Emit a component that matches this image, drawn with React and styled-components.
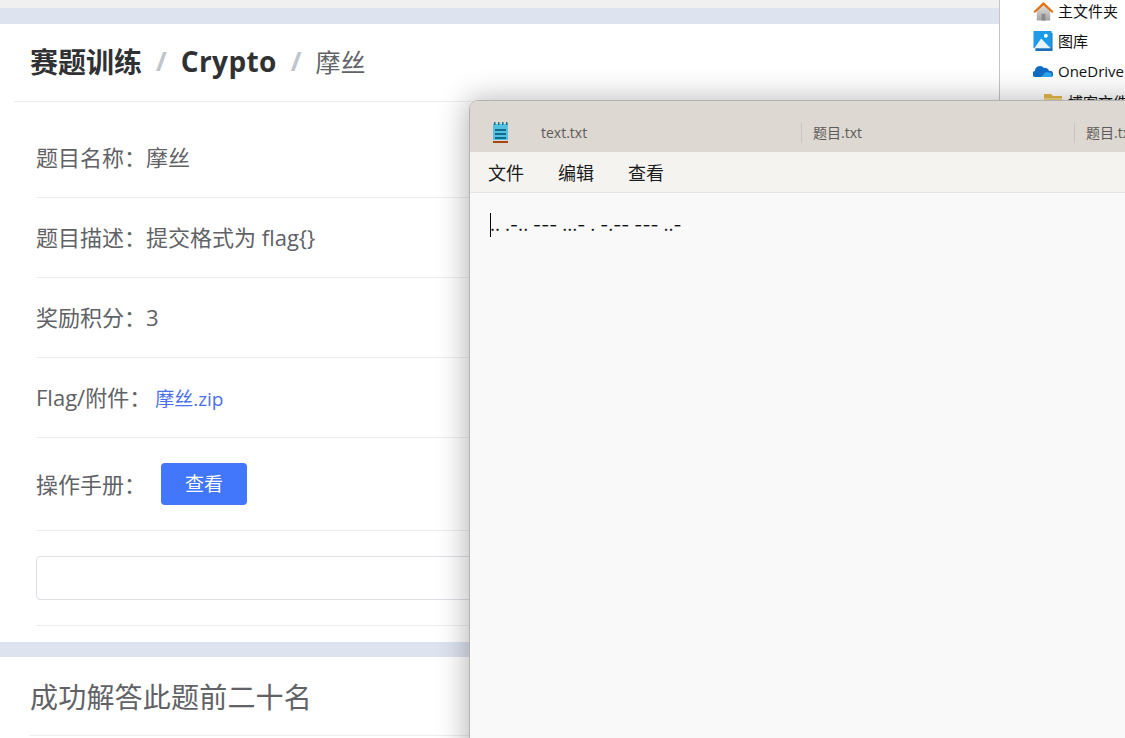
import styled, { createGlobalStyle } from 'styled-components';
import { useState } from 'react';

const GlobalStyle = createGlobalStyle`
  html, body {
    margin: 0;
    padding: 0;
    height: 738px;
    overflow: hidden;
    background: #fff;
    font-family: "Open Sans", "Noto Sans CJK SC", sans-serif;
  }
`;

const Screen = styled.div`
  position: relative;
  width: 1125px;
  height: 738px;
  overflow: hidden;
`;

const Page = styled.div`
  width: 1000px;
  height: 738px;
  border-right: 1px solid #c4c4c4;
  box-sizing: border-box;
  background: #fff;
`;

const TopStrip = styled.div`
  height: 8px;
  background: #f0f0f0;
`;

const Band = styled.div`
  height: ${p => p.$height}px;
  background: #dee3f0;
`;

const Header = styled.div`
  height: 78px;
  box-sizing: border-box;
  margin-left: 14px;
  padding: 0 0 4px 16px;
  display: flex;
  align-items: center;
  gap: 14px;
  border-bottom: 1px solid #eeeeee;
`;

const Crumb = styled.span`
  font-weight: ${p => (p.$current ? 400 : 700)};
  font-size: ${p => (p.$current ? 25 : 28)}px;
  color: ${p => (p.$current ? '#606266' : '#303133')};
  letter-spacing: ${p => (p.$latin ? 0.4 : 0)}px;
`;

const Slash = styled.span`
  color: #c0c4cc;
  font-weight: 700;
  font-size: 26px;
`;

const Body = styled.div`
  padding: 0 0 16px 36px;
`;

const Row = styled.div`
  height: ${p => p.$height}px;
  box-sizing: border-box;
  padding-top: ${p => p.$offset || 0}px;
  padding-bottom: ${p => (p.$control ? 0 : 4)}px;
  display: flex;
  align-items: center;
  border-bottom: 1px solid #eeeeee;
  font-size: 22px;
  color: #606266;
`;

const FileLink = styled.a`
  margin-left: 4px;
  padding-top: 4px;
  font-size: 19px;
  color: #4a6ff0;
`;

const ManualLabel = styled.span`
  margin-bottom: 2px;
`;

const ViewButton = styled.button`
  width: 86px;
  height: 42px;
  margin-left: 15px;
  padding: 0 0 3px;
  border: 0;
  border-radius: 4px;
  background: #4276fb;
  color: #fff;
  font: inherit;
  font-size: 19px;
`;

const FlagInput = styled.input`
  width: 100%;
  height: 44px;
  box-sizing: border-box;
  border: 1px solid #dcdfe6;
  border-radius: 4px;
  outline: none;
`;

const SectionTitle = styled.div`
  height: 79px;
  box-sizing: border-box;
  margin-left: 30px;
  display: flex;
  align-items: center;
  border-bottom: 1px solid #eeeeee;
  font-size: 28px;
  letter-spacing: 0.2px;
  color: #606266;
`;

const Explorer = styled.div`
  position: absolute;
  left: 1000px;
  top: 0;
  width: 125px;
  height: 738px;
  background: #fff;
  padding: 0 0 0 33px;
  box-sizing: border-box;
  overflow: hidden;
`;

const NavList = styled.div`
  margin-top: -4px;
`;

const NavItem = styled.div`
  height: 30px;
  display: flex;
  align-items: center;
  gap: 4px;
  margin-left: ${p => p.$indent || 0}px;
  font-size: 15px;
  color: #111;
  white-space: nowrap;
`;

const NavIcon = styled.span`
  flex: none;
  width: ${p => p.$width || 21}px;
  display: flex;
`;

const NavLabel = styled.span`
  position: relative;
  top: -1px;
`;

const Notepad = styled.div`
  position: absolute;
  left: 469px;
  top: 100px;
  width: 700px;
  height: 680px;
  box-sizing: border-box;
  border: 1px solid #b5b3b0;
  border-radius: 9px 0 0 0;
  background: #f9f9f9;
  box-shadow: -2px 0 30px rgba(0, 0, 0, 0.3);
  overflow: hidden;
`;

const TabBar = styled.div`
  height: 51px;
  box-sizing: border-box;
  padding: 12px 0 0 21px;
  display: flex;
  align-items: center;
  background: #ddd8d2;
`;

const AppIcon = styled.svg`
  flex: none;
  width: 18px;
  height: 22px;
  margin-right: 32px;
`;

const Tab = styled.div`
  width: ${p => (p.$first ? 260 : 273)}px;
  flex: none;
  box-sizing: border-box;
  padding-left: ${p => (p.$first ? 0 : 11)}px;
  height: 20px;
  line-height: 20px;
  font-size: 14px;
  color: #5d5b59;
  border-left: ${p => (p.$first ? 'none' : '1px solid #c9c5bf')};
`;

const MenuBar = styled.div`
  height: 41px;
  box-sizing: border-box;
  display: flex;
  align-items: center;
  gap: 34px;
  padding-left: 18px;
  background: #f4f3f0;
  border-bottom: 1px solid #e5e4e1;
  font-size: 18px;
  color: #1b1b1b;
`;

const Editor = styled.div`
  position: relative;
  padding: 19px 0 0 20px;
  font-family: Inter, sans-serif;
  font-size: 17.5px;
  line-height: 26px;
  color: #111;
`;

const Caret = styled.span`
  position: absolute;
  left: 20px;
  top: 20px;
  width: 1px;
  height: 24px;
  background: #000;
`;

const HomeIcon = () => (
  <svg width="21" height="20" viewBox="0 0 22 20">
    <defs>
      <linearGradient id="homeWall" x1="0" y1="0" x2="0" y2="1">
        <stop offset="0" stopColor="#e2e2e2" />
        <stop offset="1" stopColor="#a3a3a3" />
      </linearGradient>
    </defs>
    <path d="M4 9v11h14V9L11 3z" fill="url(#homeWall)" />
    <path d="M9 20v-7h4v7z" fill="#8a8a8a" />
    <path d="M0.5 10.5L11 0.5l10.5 10-1.5 1.5L11 4 2 12z" fill="#e2720f" />
  </svg>
);

const GalleryIcon = () => (
  <svg width="20" height="20" viewBox="0 0 20 21">
    <rect x="2" y="2" width="18" height="19" fill="#1f6fb8" />
    <rect x="0" y="0" width="19" height="18" fill="#1e9be8" />
    <circle cx="13" cy="5" r="2" fill="#fff" />
    <path d="M1 18l7-10 10 10z" fill="#e8f4fc" />
  </svg>
);

const CloudIcon = () => (
  <svg width="20" height="14" viewBox="0 0 20 14">
    <path d="M3 13a3 3 0 0 1-1-6 5 5 0 0 1 9-3 4 4 0 0 1 5 3 3 3 0 0 1 2 6z" fill="#0f6cc4" />
    <path d="M8 13l5-5 5 1a3 3 0 0 1 0 4z" fill="#29a8ea" />
  </svg>
);

const FolderIcon = () => (
  <svg width="18" height="14" viewBox="0 0 18 14">
    <path d="M0 0h7l2 2h9v12H0z" fill="#e9b949" />
    <rect y="4" width="18" height="10" fill="#f7d97e" />
  </svg>
);

const NotepadIcon = () => (
  <AppIcon viewBox="0 0 18 22">
    <rect x="2" y="2" width="15" height="16" fill="#56c0e0" />
    <rect x="4" y="7" width="11" height="2" fill="#0f6c8e" />
    <rect x="4" y="11" width="11" height="2" fill="#0f6c8e" />
    <rect x="4" y="15" width="11" height="2" fill="#0f6c8e" />
    <rect x="3" y="0" width="1.5" height="3" fill="#1a6f8c" />
    <rect x="7" y="0" width="1.5" height="3" fill="#1a6f8c" />
    <rect x="11" y="0" width="1.5" height="3" fill="#1a6f8c" />
    <rect x="15" y="0" width="1.5" height="3" fill="#1a6f8c" />
    <rect x="2" y="19" width="15" height="2" fill="#a3490f" />
  </AppIcon>
);

const COLON = '\uFF1A';
const infoRows = [`题目描述${COLON}提交格式为 flag{}`, `奖励积分${COLON}3`];

export default function App() {
  const [flag, setFlag] = useState('');

  return (
    <Screen>
      <GlobalStyle />
      <Page>
        <TopStrip />
        <Band $height={16} />
        <Header>
          <Crumb>赛题训练</Crumb>
          <Slash>/</Slash>
          <Crumb $latin>Crypto</Crumb>
          <Slash>/</Slash>
          <Crumb $current>摩丝</Crumb>
        </Header>
        <Body>
          <Row $height={96} $offset={16}>{`题目名称${COLON}摩丝`}</Row>
          {infoRows.map(text => (
            <Row key={text} $height={80}>{text}</Row>
          ))}
          <Row $height={80}>
            {`Flag/附件${COLON}`}<FileLink>摩丝.zip</FileLink>
          </Row>
          <Row $height={93} $control>
            <ManualLabel>{`操作手册${COLON}`}</ManualLabel><ViewButton>查看</ViewButton>
          </Row>
          <Row $height={95} $control>
            <FlagInput value={flag} onChange={e => setFlag(e.target.value)} />
          </Row>
        </Body>
        <Band $height={15} />
        <SectionTitle>成功解答此题前二十名</SectionTitle>
      </Page>
      <Explorer>
        <NavList>
          <NavItem><NavIcon><HomeIcon /></NavIcon><NavLabel>主文件夹</NavLabel></NavItem>
          <NavItem><NavIcon><GalleryIcon /></NavIcon><NavLabel>图库</NavLabel></NavItem>
          <NavItem><NavIcon><CloudIcon /></NavIcon>OneDrive</NavItem>
          <NavItem $indent={11}><NavIcon $width={20}><FolderIcon /></NavIcon>博客文件</NavItem>
        </NavList>
      </Explorer>
      <Notepad>
        <TabBar>
          <NotepadIcon />
          <Tab $first>text.txt</Tab>
          <Tab>题目.txt</Tab>
          <Tab>题目.txt</Tab>
        </TabBar>
        <MenuBar>
          <span>文件</span>
          <span>编辑</span>
          <span>查看</span>
        </MenuBar>
        <Editor>
          <Caret />
          .. .-.. --- ...- . -.-- --- ..-
        </Editor>
      </Notepad>
    </Screen>
  );
}
